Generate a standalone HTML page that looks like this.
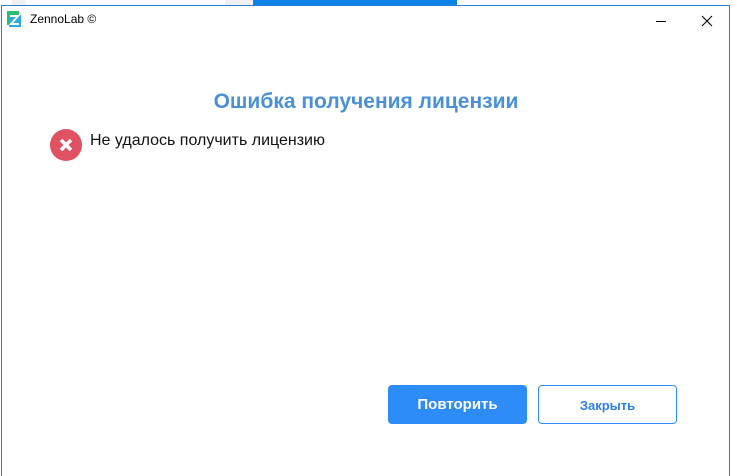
<!DOCTYPE html>
<html><head><meta charset="utf-8"><style>
body{margin:0;width:732px;height:472px;background:#fff;position:relative;overflow:hidden;font-family:"Segoe UI","Liberation Sans","DejaVu Sans",sans-serif;}
.top{position:absolute;left:0;top:0;width:732px;height:5px;background:#fff}
.win{position:absolute;left:1px;top:5px;width:727px;height:470px;border:1px solid #2b7fd6;border-bottom:none;background:#fff}
.t{position:absolute;font-size:12px;color:#000;left:30px;top:5px}
h1{position:absolute;margin:0;left:0;width:732px;text-align:center;top:90px;font-size:21px;font-weight:bold;color:#4a90d9}
.msg{position:absolute;left:90px;top:132px;font-size:16px;color:#111}
.btn{position:absolute;top:385px;width:139px;height:39px;border-radius:4px;box-sizing:border-box;font-size:14px;font-weight:bold;text-align:center;line-height:39px}
</style></head><body>
<div class="top"><div style="position:absolute;left:12px;top:0;width:14px;height:5px;background:#f0f0f0"></div><div style="position:absolute;left:225px;top:0;width:28px;height:5px;background:#f0f0f0"></div><div style="position:absolute;left:253px;top:0;width:204px;height:5px;background:#0a84e8"></div></div>
<div class="win"></div>
<svg style="position:absolute;left:7px;top:11px" width="14" height="16" viewBox="0 0 14 16"><rect x="0" y="0" width="12" height="14" fill="#2dbf6a"/><rect x="2" y="4" width="12" height="12" fill="#29a9e8"/><path d="M3 5h8L4 13h8" stroke="#fff" stroke-width="2" fill="none"/></svg>
<div class="t" style="top:12px">ZennoLab ©</div>
<div style="position:absolute;left:656px;top:21px;width:10px;height:1px;background:#000"></div>
<svg style="position:absolute;left:701px;top:15px" width="12" height="12"><path d="M1 1L11 11M11 1L1 11" stroke="#000" stroke-width="1"/></svg>
<h1>Ошибка получения лицензии</h1>
<svg style="position:absolute;left:50px;top:129px" width="32" height="32"><circle cx="16" cy="16" r="16" fill="#e05262"/><path d="M11 11L21 21M21 11L11 21" stroke="#fff" stroke-width="3.5"/></svg>
<div class="msg">Не удалось получить лицензию</div>
<div class="btn" style="left:388px;background:#2e8cf9;color:#fff;font-size:15px">Повторить</div>
<div class="btn" style="left:538px;border:1px solid #2e8cf9;color:#2e7ef0;font-size:13px">Закрыть</div>
</body></html>
